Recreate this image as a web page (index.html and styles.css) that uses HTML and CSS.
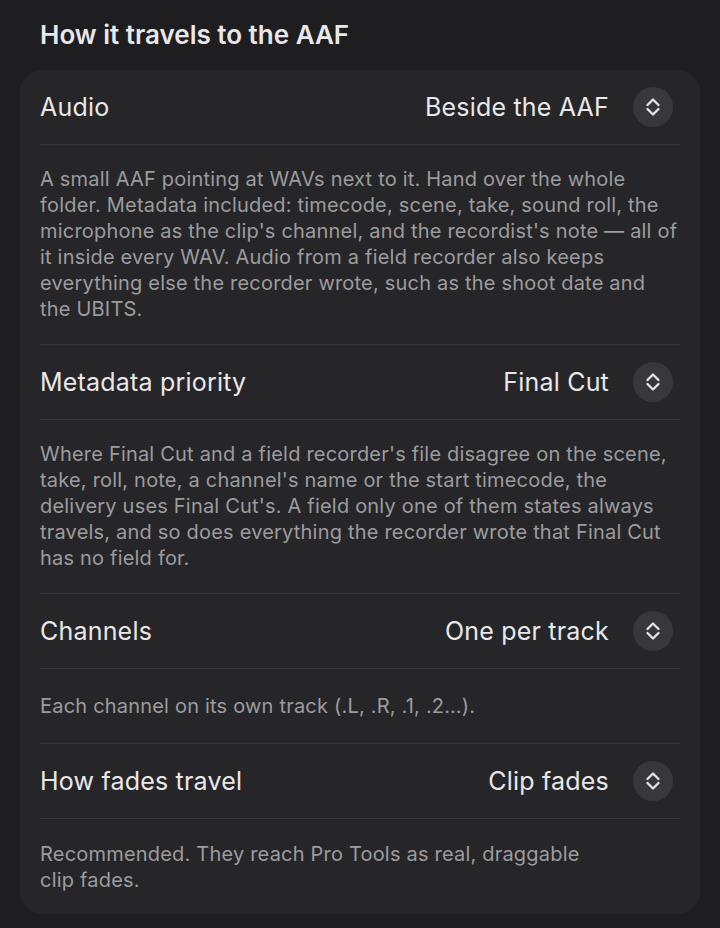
FILE: index.html
```html
<!DOCTYPE html>
<html lang="en">
<head>
<meta charset="utf-8">
<title>How it travels to the AAF</title>
<link rel="stylesheet" href="styles.css">
</head>
<body>
<main class="page">
  <h2 class="heading">How it travels to the AAF</h2>
  <section class="card">
    <div class="row">
      <span class="label">Audio</span>
      <span class="picker"><span class="value">Beside the AAF</span><span class="stepper"><svg viewBox="0 0 14 22" width="14" height="22"><path d="M1.5 9 L7 3.5 L12.5 9 M1.5 13 L7 18.5 L12.5 13"/></svg></span></span>
    </div>
    <p class="desc">A small AAF pointing at WAVs next to it. Hand over the whole folder. Metadata included: timecode, scene, take, sound roll, the microphone as the clip's channel, and the recordist's note — all of it inside every WAV. Audio from a field recorder also keeps everything else the recorder wrote, such as the shoot date and the UBITS.</p>
    <div class="row">
      <span class="label">Metadata priority</span>
      <span class="picker"><span class="value">Final Cut</span><span class="stepper"><svg viewBox="0 0 14 22" width="14" height="22"><path d="M1.5 9 L7 3.5 L12.5 9 M1.5 13 L7 18.5 L12.5 13"/></svg></span></span>
    </div>
    <p class="desc">Where Final Cut and a field recorder's file disagree on the scene, take, roll, note, a channel's name or the start timecode, the delivery uses Final Cut's. A field only one of them states always travels, and so does everything the recorder wrote that Final Cut has no field for.</p>
    <div class="row">
      <span class="label">Channels</span>
      <span class="picker"><span class="value">One per track</span><span class="stepper"><svg viewBox="0 0 14 22" width="14" height="22"><path d="M1.5 9 L7 3.5 L12.5 9 M1.5 13 L7 18.5 L12.5 13"/></svg></span></span>
    </div>
    <p class="desc desc-single">Each channel on its own track (.L, .R, .1, .2…).</p>
    <div class="row">
      <span class="label">How fades travel</span>
      <span class="picker"><span class="value">Clip fades</span><span class="stepper"><svg viewBox="0 0 14 22" width="14" height="22"><path d="M1.5 9 L7 3.5 L12.5 9 M1.5 13 L7 18.5 L12.5 13"/></svg></span></span>
    </div>
    <p class="desc desc-last">Recommended. They reach Pro Tools as real, draggable<br>clip fades.</p>
  </section>
</main>
</body>
</html>
```

FILE: styles.css
```css
html, body {
  margin: 0;
  padding: 0;
  background: #1e1e20;
}

body {
  font-family: Inter, "Noto Sans", "Liberation Sans", sans-serif;
  color: #e6e6e8;
  -webkit-font-smoothing: antialiased;
}

.page {
  padding: 20px 20px 16px;
}

.heading {
  margin: 0 0 20px;
  padding-left: 20px;
  font-size: 26px;
  line-height: 30px;
  font-weight: 600;
  color: #e8e8ea;
}

.card {
  background: #262628;
  border-radius: 22px;
  padding: 0 20px;
}

.row {
  height: 75px;
  display: flex;
  align-items: center;
  justify-content: space-between;
  border-bottom: 1px solid #38383a;
  box-sizing: border-box;
}

.label,
.value {
  font-size: 25px;
  letter-spacing: 0.2px;
  color: #e8e8ea;
}

.picker {
  display: flex;
  align-items: center;
  gap: 24px;
  margin-right: 7px;
}

.stepper {
  width: 40px;
  height: 40px;
  border-radius: 50%;
  background: #38383a;
  display: flex;
  align-items: center;
  justify-content: center;
}

.stepper svg path {
  fill: none;
  stroke: #e4e4e6;
  stroke-width: 2.3;
  stroke-linecap: round;
  stroke-linejoin: round;
}

.desc {
  margin: 0;
  padding: 21px 0 22px;
  font-size: 20px;
  line-height: 26px;
  letter-spacing: 0.2px;
  color: #9c9c9f;
  border-bottom: 1px solid #38383a;
}

.desc-single {
  padding: 24px 0 24px;
}

.desc-last {
  border-bottom: none;
  padding: 22px 0 21px;
}
```
